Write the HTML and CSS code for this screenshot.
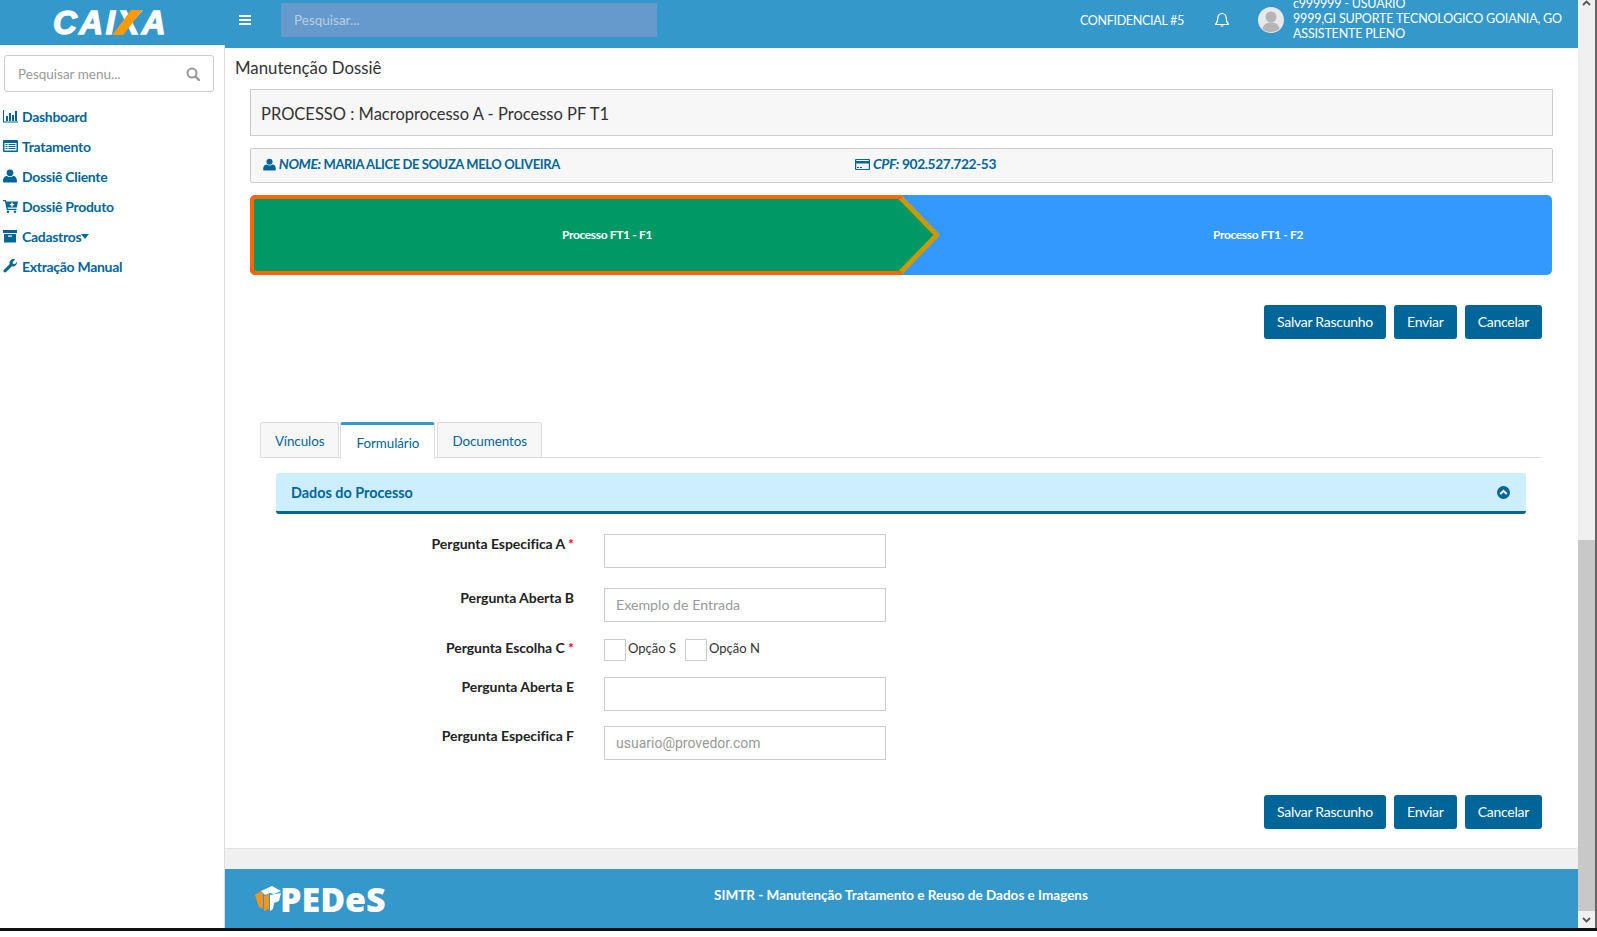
FILE: index.html
```html
<!DOCTYPE html>
<html lang="pt-BR">
<head>
    <meta charset="UTF-8">
    <title>Manutenção Dossiê</title>
    <link rel="stylesheet" href="styles.css">
</head>
<body>
    <div class="shell">
        <aside class="side">
            <div class="brand"><span class="brand-name">CAI<span class="brand-x">X</span>A</span></div>
            <div class="side-search">
                <input type="text" placeholder="Pesquisar menu...">
                <svg width="14" height="14" viewBox="0 0 14 14"><circle cx="6" cy="6" r="4.5" fill="none" stroke="#999" stroke-width="2"/><path d="M9.3 9.3 13 13" stroke="#999" stroke-width="2.4" stroke-linecap="round"/></svg>
            </div>
            <nav class="side-menu">
                <a href="#"><svg width="15" height="14" viewBox="0 0 15 14"><path d="M0 1h1v11.5h14v1H0z"/><path d="M3 7h2v5H3zM6 4h2v8H6zM9 6h2v6H9zM12 2h2v10h-2z"/></svg>Dashboard</a>
                <a href="#"><svg width="15" height="14" viewBox="0 0 15 14"><path fill-rule="evenodd" d="M1 1h13a1 1 0 0 1 1 1v10a1 1 0 0 1-1 1H1a1 1 0 0 1-1-1V2a1 1 0 0 1 1-1zm.5 3v7.500h12V4z"/><path d="M2.500 5h2v1h-2zM5.500 5h7v1h-7zM2.500 7h2v1h-2zM5.500 7h7v1h-7zM2.500 9h2v1h-2zM5.500 9h7v1h-7z"/></svg>Tratamento</a>
                <a href="#"><svg width="15" height="14" viewBox="0 0 15 14"><circle cx="7" cy="3.800" r="3.400"/><path d="M1 13.500c-.6 0-1-.4-1-1 0-3 1-5.500 3.800-5.500.9.700 2 1.100 3.200 1.100s2.300-.4 3.200-1.100C13 7 14 9.500 14 12.500c0 .6-.4 1-1 1z"/></svg>Dossiê Cliente</a>
                <a href="#"><svg width="15" height="14" viewBox="0 0 15 14"><path d="M0 1h2.800l.4 1.500H15l-1.200 6H4.600l.3 1.300h8.600v1.200H3.800L1.900 2.200H0z"/><circle cx="5" cy="12.700" r="1.300"/><circle cx="12" cy="12.700" r="1.300"/><path d="M8.300 3.500h1.400V5h1.500v1.300H9.700v1.500H8.300V6.300H6.800V5h1.500z" fill="#fff"/></svg>Dossiê Produto</a>
                <a href="#"><svg width="15" height="14" viewBox="0 0 15 14"><path d="M0 1h14v3H0zM1 5h12v8.500H1z"/><path d="M5 6.500h4v1.200H5z" fill="#fff"/></svg>Cadastros<span class="caret"></span></a>
                <a href="#"><svg width="15" height="14" viewBox="0 0 15 14"><path d="M14 3.500c0 2.300-1.800 4-4 4-.4 0-.8 0-1.100-.2l-5.800 5.800c-.6.600-1.600.6-2.200 0s-.6-1.600 0-2.200l5.800-5.800C6.600 4.700 6.500 4.300 6.500 4c0-2.200 1.800-4 4-4 .6 0 1.200.1 1.700.4L9.500 3l.5 1.800 1.800.5 2-2.300c.1.100.2.300.2.500z"/></svg>Extração Manual</a>
            </nav>
        </aside>

        <div class="page">
            <header class="topbar">
                <button class="hamburger"><span></span><span></span><span></span></button>
                <input class="top-search" type="text" placeholder="Pesquisar...">
                <div class="top-right">
                    <span class="confidential">CONFIDENCIAL #5</span>
                    <svg class="bell" width="16" height="16" viewBox="0 0 16 16"><path d="M8 1.500c-2.600 0-4.200 2-4.200 4.500 0 3-.9 5-2.300 6.500h13c-1.400-1.500-2.300-3.500-2.300-6.500 0-2.500-1.600-4.500-4.200-4.500z" fill="none" stroke="#fff" stroke-width="1.200" stroke-linejoin="round"/><path d="M6.300 13.500a1.800 1.800 0 0 0 3.400 0z" fill="#fff"/></svg>
                    <svg class="avatar" width="26" height="26" viewBox="0 0 26 26"><circle cx="13" cy="13" r="13" fill="#e8e8e8"/><circle cx="13" cy="10" r="5.500" fill="#b5b5b5"/><path d="M4.500 22c.6-4.500 4-6.500 8.500-6.500s7.900 2 8.500 6.500a13 13 0 0 1-17 0z" fill="#b5b5b5"/></svg>
                    <div class="user-info">
                        <div>c999999 - USUARIO</div>
                        <div>9999,GI SUPORTE TECNOLOGICO GOIANIA, GO</div>
                        <div>ASSISTENTE PLENO</div>
                    </div>
                </div>
            </header>

            <main class="main">
                <h1 class="page-title">Manutenção Dossiê</h1>
                <div class="content">
                    <div class="process-box">PROCESSO : Macroprocesso A - Processo PF T1</div>

                    <div class="client-box">
                        <div class="client-name">
                            <svg width="13" height="13" viewBox="0 0 15 14"><circle cx="7.500" cy="3.800" r="3.500"/><path d="M1.500 13.800c-.8 0-1.300-.4-1.300-1.100 0-3.200 1-5.700 4-5.700.9.700 2 1.100 3.300 1.100s2.400-.4 3.300-1.100c3 0 4 2.500 4 5.700 0 .7-.5 1.100-1.300 1.100z"/></svg>
                            <em>NOME:</em> MARIA ALICE DE SOUZA MELO OLIVEIRA
                        </div>
                        <div class="client-cpf">
                            <svg width="15" height="13" viewBox="0 0 15 13"><path fill-rule="evenodd" d="M1 1h13a1 1 0 0 1 1 1v9a1 1 0 0 1-1 1H1a1 1 0 0 1-1-1V2a1 1 0 0 1 1-1zm.2 1v1h12.600V2zm0 3.500V11h12.600V5.500z"/><path d="M2 9h2v1H2zM5 9h2v1H5z"/></svg>
                            <em>CPF:</em> 902.527.722-53
                        </div>
                    </div>

                    <div class="stepper">
                        <svg class="stepper-arrow" width="692" height="80" viewBox="0 0 692 80">
                            <path d="M2 6q0-4 4-4h644l36 38-36 38H6q-4 0-4-4z" fill="#009966"/>
                            <path d="M650 2 687 40 650 78" fill="none" stroke="#cc9900" stroke-width="5" stroke-linejoin="round"/>
                            <path d="M652 2H6q-4 0-4 4v68q0 4 4 4h646" fill="none" stroke="#ff6600" stroke-width="4"/>
                        </svg>
                        <div class="step step-one">Processo FT1 - F1</div>
                        <div class="step step-two">Processo FT1 - F2</div>
                    </div>

                    <div class="actions">
                        <button class="btn">Salvar Rascunho</button>
                        <button class="btn">Enviar</button>
                        <button class="btn">Cancelar</button>
                    </div>

                    <ul class="tabs">
                        <li class="tab">Vínculos</li>
                        <li class="tab active">Formulário</li>
                        <li class="tab">Documentos</li>
                    </ul>

                    <div class="panel-head">
                        <span>Dados do Processo</span>
                        <svg width="13" height="13" viewBox="0 0 13 13"><circle cx="6.500" cy="6.500" r="6.500" fill="#006699"/><path d="M3.300 8 6.500 4.800 9.700 8" fill="none" stroke="#fff" stroke-width="2"/></svg>
                    </div>

                    <form class="form">
                        <div class="row row-first">
                            <label>Pergunta Especifica A <i>*</i></label>
                            <input type="text">
                        </div>
                        <div class="row">
                            <label>Pergunta Aberta B</label>
                            <input type="text" placeholder="Exemplo de Entrada">
                        </div>
                        <div class="row">
                            <label>Pergunta Escolha C <i>*</i></label>
                            <div class="options">
                                <span class="check"></span><span class="check-label">Opção S</span>
                                <span class="check"></span><span class="check-label">Opção N</span>
                            </div>
                        </div>
                        <div class="row row-tight">
                            <label>Pergunta Aberta E</label>
                            <input type="text">
                        </div>
                        <div class="row">
                            <label>Pergunta Especifica F</label>
                            <input class="input-mail" type="text" placeholder="usuario@provedor.com">
                        </div>
                    </form>

                    <div class="actions actions-bottom">
                        <button class="btn">Salvar Rascunho</button>
                        <button class="btn">Enviar</button>
                        <button class="btn">Cancelar</button>
                    </div>
                </div>
            </main>

            <footer class="footer">
                <div class="footer-logo">
                    <svg width="27" height="26" viewBox="0 0 27 26">
                        <path d="M0 9 6 5l2 3v15l-4-2z" fill="#f7941d"/>
                        <path d="M6 5 17 0l9 5-7 3-4-1-5 2z" fill="#fff"/>
                        <path d="M9 10l5-2v15l-5 2z" fill="#f7941d"/>
                        <path d="M15 9l11-2-2 8-5 2-1 6-3 2z" fill="#fff"/>
                    </svg>
                    <span>PEDeS</span>
                </div>
                <div class="footer-text">SIMTR - Manutenção Tratamento e Reuso de Dados e Imagens</div>
            </footer>
        </div>

        <div class="scrollbar">
            <div class="scroll-btn scroll-up"><svg width="9" height="6" viewBox="0 0 9 6"><path d="M1 5 4.500 1.500 8 5" fill="none" stroke="#555" stroke-width="1.800"/></svg></div>
            <div class="scroll-track"></div>
            <div class="scroll-thumb"></div>
            <div class="scroll-btn"><svg width="9" height="6" viewBox="0 0 9 6"><path d="M1 1 4.500 4.500 8 1" fill="none" stroke="#555" stroke-width="1.800"/></svg></div>
        </div>
    </div>
    <div class="window-edge"></div>
</body>
</html>
```

FILE: styles.css
```css
* {
    box-sizing: border-box;
}

body {
    margin: 0;
    height: 937px;
    overflow: hidden;
    background: #fff;
    font-family: Lato, "Open Sans", sans-serif;
    font-size: 14px;
    color: #222;
}

.shell {
    display: grid;
    grid-template-columns: 225px 1353px 19px;
    height: 928px;
}

.window-edge {
    height: 3px;
    background: #111;
}

/* sidebar */
.side {
    background: #fff;
    box-shadow: inset -1px 0 #ddd;
}

.brand {
    height: 45px;
    background: #3498cb;
    padding: 5px 0 0 53px;
}

.brand-name {
    font-family: "Liberation Sans", sans-serif;
    font-size: 33px;
    line-height: 36px;
    font-weight: bold;
    font-style: italic;
    letter-spacing: 2.5px;
    color: #fff;
    -webkit-text-stroke: 1.4px #fff;
}

.brand-x {
    position: relative;
    display: inline-block;
}

.brand-x:after {
    content: '';
    position: absolute;
    left: -5px;
    top: 5px;
    width: 30px;
    height: 25px;
    background: #ff9900;
    clip-path: polygon(62% 0, 100% 0, 36% 100%, 0 100%);
}

.side-search {
    position: relative;
    margin: 10px 11px 0 4px;
}

.side-search input {
    width: 100%;
    height: 37px;
    border: 1px solid #ccc;
    border-radius: 3px;
    padding: 0 13px;
    font-family: Lato, sans-serif;
    font-size: 13.5px;
    outline: none;
}

.side-search input::placeholder {
    color: #999;
}

.side-search svg {
    position: absolute;
    right: 14px;
    top: 12px;
}

.side-menu {
    margin-top: 9px;
}

.side-menu a {
    display: flex;
    align-items: center;
    height: 30px;
    padding-left: 3px;
    gap: 4px;
    color: #006699;
    font-weight: bold;
    letter-spacing: -0.3px;
    text-decoration: none;
}

.side-menu svg {
    fill: #006699;
    flex: none;
}

.caret {
    width: 0;
    height: 0;
    margin-left: -4px;
    border-left: 4px solid transparent;
    border-right: 4px solid transparent;
    border-top: 5px solid #006699;
}

/* top bar */
.page {
    display: flex;
    flex-direction: column;
    min-width: 0;
    background: #f0f0f0;
}

.topbar {
    display: flex;
    align-items: center;
    height: 48px;
    padding: 0 15px 8px 14px;
    background: #3498cb;
    overflow: hidden;
    color: #fff;
}

.hamburger {
    display: flex;
    flex-direction: column;
    gap: 2px;
    width: 12px;
    padding: 0;
    border: none;
    background: transparent;
}

.hamburger span {
    display: block;
    height: 2px;
    background: #fff;
}

.top-search {
    width: 376px;
    height: 34px;
    margin-left: 30px;
    padding: 0 13px;
    border: none;
    background: #6699cc;
    font-family: Lato, sans-serif;
    font-size: 13.5px;
    outline: none;
}

.top-search::placeholder {
    color: #b9cfe6;
}

.top-right {
    display: flex;
    align-items: center;
    margin-left: auto;
}

.confidential {
    font-size: 12.5px;
    letter-spacing: -0.3px;
}

.bell {
    margin-left: 30px;
}

.avatar {
    margin-left: 28px;
}

.user-info {
    width: 270px;
    margin-left: 9px;
    font-size: 12.5px;
    line-height: 15px;
    letter-spacing: -0.18px;
    white-space: nowrap;
    position: relative;
    top: -1.5px;
}

/* main area */
.main {
    height: 801px;
    flex: none;
    background: #fff;
    border-bottom: 1px solid #e2e2e2;
    border-bottom-right-radius: 3px;
}

.page-title {
    margin: 0;
    padding: 8px 0 0 10px;
    height: 41px;
    font-size: 16.8px;
    line-height: 23px;
    font-weight: normal;
    color: #333;
}

.content {
    margin: 0 25px;
}

.process-box {
    height: 47px;
    line-height: 48px;
    padding-left: 10px;
    background: #f7f7f7;
    border: 1px solid #ccc;
    font-size: 16.5px;
    color: #333;
}

.client-box {
    display: flex;
    align-items: center;
    height: 35px;
    margin-top: 12px;
    padding: 0 0 4px 12px;
    background: #f7f7f7;
    border: 1px solid #ccc;
    border-radius: 2px;
    color: #006699;
    font-weight: bold;
    letter-spacing: -0.4px;
}

.client-name {
    width: 592px;
    font-size: 13px;
}

.client-cpf {
    font-size: 13.8px;
}

.client-box svg {
    fill: #006699;
    vertical-align: -2px;
}

.client-box em {
    font-size: 14px;
}

/* stepper */
.stepper {
    position: relative;
    display: flex;
    align-items: center;
    height: 80px;
    margin: 12px 1px 0 0;
    background: #3399ff;
    border-radius: 5px;
    color: #fff;
    font-size: 12px;
    font-weight: bold;
    letter-spacing: -0.35px;
    text-align: center;
}

.stepper-arrow {
    position: absolute;
    left: 0;
    top: 0;
}

.step {
    position: relative;
    padding-bottom: 2px;
}

.step-one {
    width: 714px;
}

.step-two {
    flex: 1;
}

.actions {
    display: flex;
    justify-content: flex-end;
    gap: 8px;
    margin: 30px 11px 0 0;
}

.actions-bottom {
    margin-top: 35px;
}

.btn {
    height: 34px;
    padding: 0 13px 2px;
    border: none;
    border-radius: 3px;
    background: #006699;
    color: #fff;
    font-family: Lato, sans-serif;
    font-size: 14px;
    letter-spacing: -0.26px;
}

/* tabs */
.tabs {
    display: flex;
    gap: 2px;
    height: 36px;
    margin: 83px 12px 0 10px;
    padding: 0;
    list-style: none;
    border-bottom: 1px solid #ddd;
}

.tab {
    height: 35px;
    padding: 0 14px;
    line-height: 36px;
    background: #f7f7f7;
    border: 1px solid #ddd;
    border-bottom: none;
    border-radius: 3px 3px 0 0;
    color: #006699;
    font-size: 13.4px;
    letter-spacing: -0.05px;
}

.tab.active {
    height: 37px;
    line-height: 37px;
    padding: 0 15px;
    margin-left: -1px;
    background: #fff;
    border-top: 3px solid #3498cb;
}

.panel-head {
    display: flex;
    align-items: center;
    justify-content: space-between;
    height: 41px;
    margin: 15px 27px 0 26px;
    padding: 0 16px 0 15px;
    background: #cceeff;
    border-bottom: 3px solid #006699;
    border-radius: 3px;
    color: #006699;
    font-size: 14.4px;
    font-weight: bold;
}

/* form */
.form {
    margin-top: 20px;
}

.row {
    display: flex;
    align-items: flex-start;
    gap: 30px;
    margin-bottom: 16px;
}

.row-first {
    margin-bottom: 20px;
}

.row-tight {
    margin-bottom: 15px;
}

.row:last-child {
    margin-bottom: 0;
}

.row label {
    width: 324px;
    text-align: right;
    font-weight: bold;
    line-height: 20px;
    letter-spacing: -0.05px;
    color: #222;
}

.row label i {
    color: #ee0033;
    font-style: normal;
}

.row input {
    width: 282px;
    height: 34px;
    padding: 0 11px 2px;
    border: 1px solid #ccc;
    font-family: Lato, sans-serif;
    font-size: 14.2px;
    outline: none;
}

.row input::placeholder {
    color: #999;
}

.row .input-mail {
    padding-bottom: 0;
    font-family: Roboto, sans-serif;
    font-size: 14px;
}

.options {
    display: flex;
    align-items: center;
    height: 23px;
}

.check {
    width: 22px;
    height: 22px;
    border: 1px solid #ccc;
}

.check-label {
    margin: 0 9px 0 2px;
    padding-bottom: 3px;
    font-size: 13px;
    color: #333;
}

/* footer */
.footer {
    position: relative;
    display: flex;
    align-items: center;
    height: 59px;
    margin-top: 20px;
    padding-left: 30px;
    background: #3498cb;
    color: #fff;
}

.footer-logo {
    display: flex;
    align-items: center;
    width: 459px;
}

.footer-logo svg {
    margin-right: -2px;
}

.footer-logo span {
    font-family: "Open Sans", sans-serif;
    font-size: 34px;
    font-weight: 800;
    line-height: 40px;
}

.footer-text {
    font-weight: bold;
    font-size: 13.5px;
    padding-bottom: 8px;
}

/* fake browser scrollbar */
.scrollbar {
    display: flex;
    flex-direction: column;
    background: #f0f0f0;
    border-right: 2px solid #666;
}

.scroll-btn {
    display: flex;
    align-items: center;
    justify-content: center;
    height: 17px;
}

.scroll-up {
    align-items: flex-start;
    height: 17px;
}

.scroll-track {
    height: 523px;
}

.scroll-thumb {
    flex: 1;
    background: #c8c8c8;
}
```
